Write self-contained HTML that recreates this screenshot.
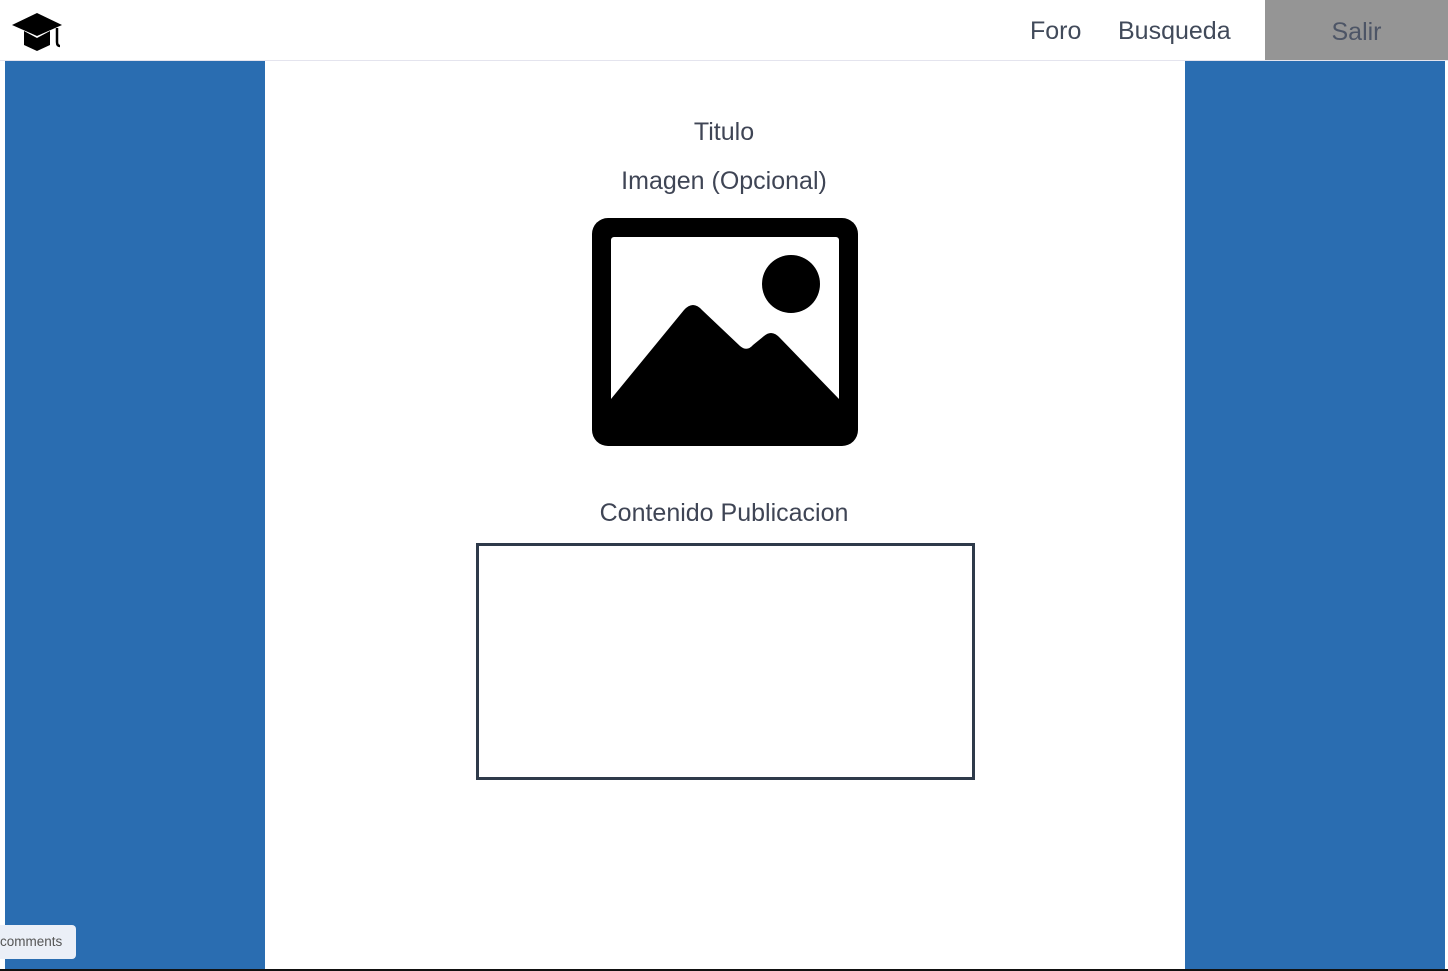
<!DOCTYPE html>
<html><head><meta charset="utf-8"><style>
*{margin:0;padding:0;box-sizing:border-box}
body{width:1448px;height:971px;background:#fff;font-family:"Liberation Sans",sans-serif;color:#3f4555;position:relative;overflow:hidden}
.hdr{position:absolute;left:0;top:0;width:1448px;height:61px;border-bottom:1px solid #e4e4ee;background:#fff}
.nav{position:absolute;top:17px;font-size:25px;color:#414a5a}
.salir{position:absolute;left:1265px;top:0;width:183px;height:60px;background:#959595;color:#4d5566;font-size:25px;text-align:center;line-height:64px}
.bl{position:absolute;top:61px;height:908px;background:#2a6db1}
.c{position:absolute;left:0;width:1448px;text-align:center;font-size:25px;color:#3f4555}
.box{position:absolute;left:476px;top:543px;width:499px;height:237px;border:3px solid #2e3a4a}
.cm{position:absolute;left:-4px;top:925px;width:80px;height:34px;background:#ebeff7;border-radius:4px;font-size:13.5px;color:#555;line-height:34px;padding-left:4px}
.bot{position:absolute;left:0;top:969px;width:1448px;height:2px;background:#111}
</style></head><body>
<div class="hdr"></div>
<svg style="position:absolute;left:11px;top:12px" width="52" height="40" viewBox="0 0 52 40">
<polygon points="1,13 26,1 51,13 26,24" fill="#000"/>
<path d="M13,19 L13,33 L26,39 L39,33 L39,19 L26,26 Z" fill="#000"/>
<path d="M46,16 L46,30 Q46,34 49,34" stroke="#000" stroke-width="2.5" fill="none"/>
</svg>
<div class="nav" style="left:1030px">Foro</div>
<div class="nav" style="left:1118px">Busqueda</div>
<div class="salir">Salir</div>
<div class="bl" style="left:5px;width:260px"></div>
<div class="bl" style="left:1185px;width:260px"></div>
<div class="c" style="top:118px">Titulo</div>
<div class="c" style="top:167px">Imagen (Opcional)</div>
<svg style="position:absolute;left:592px;top:218px" width="266" height="228" viewBox="0 0 266 228">
<rect x="0" y="0" width="266" height="228" rx="16" fill="#000"/>
<rect x="19" y="19" width="228" height="190" rx="3" fill="#fff"/>
<circle cx="199" cy="66" r="29" fill="#000"/>
<path d="M19,181 L92,92 Q101,82 110,92 L148,128 Q155,134 161,127 L172,118 Q180,111 188,120 L247,181 L247,209 L19,209 Z" fill="#000"/>
</svg>
<div class="c" style="top:499px">Contenido Publicacion</div>
<div class="box"></div>
<div class="cm">comments</div>
<div class="bot"></div>
</body></html>
